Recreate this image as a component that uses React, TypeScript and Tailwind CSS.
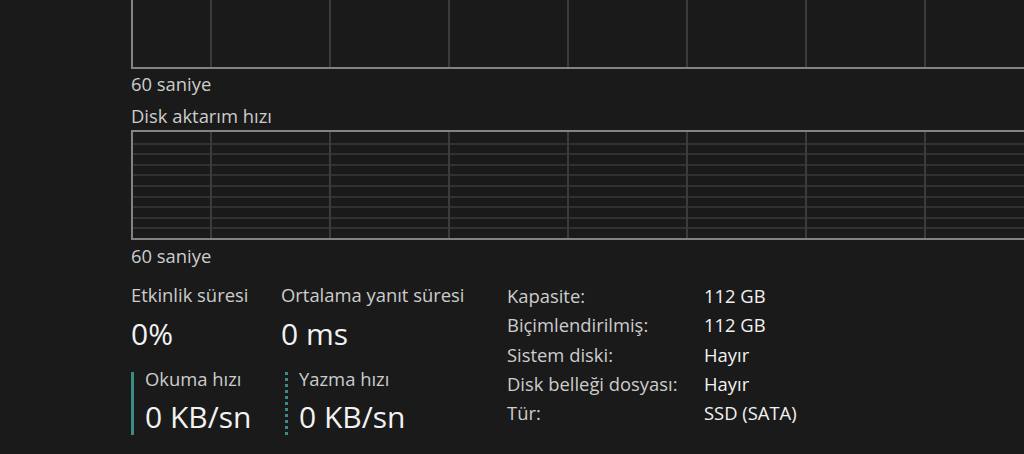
import React from "react";

const FONT = { fontFamily: '"Open Sans", "Noto Sans", sans-serif' };

const GRID_X = [0, 1, 2, 3, 4, 5, 6, 7].map((i) => 77 + i * 119);

function GridLines({ height, rows }: { height: number; rows: number }) {
  const ys = Array.from({ length: rows - 1 }, (_, i) => ((i + 1) * height) / rows);
  return (
    <svg width="1000" height={height} className="block" shapeRendering="crispEdges">
      {ys.map((y) => (
        <line key={y} x1="0" x2="1000" y1={Math.round(y) + 0.5} y2={Math.round(y) + 0.5} stroke="#313131" strokeWidth="2" />
      ))}
      {GRID_X.map((x) => (
        <line key={x} x1={x + 0.5} x2={x + 0.5} y1="0" y2={height} stroke="#3b3b3b" strokeWidth="2" />
      ))}
    </svg>
  );
}

function Metric({ label, value }: { label: string; value: string }) {
  return (
    <div>
      <div className="text-[18.4px] leading-[24px] text-[#cdcdcd] whitespace-nowrap">{label}</div>
      <div className="mt-[9px] text-[30px] leading-[36px] text-[#f2f2f2]">{value}</div>
    </div>
  );
}

function Rate({ label, value, dotted }: { label: string; value: string; dotted?: boolean }) {
  return (
    <div className="flex mt-[20px]">
      {dotted ? (
        <div className="flex flex-col gap-[3px] w-[3px]">
          {Array.from({ length: 11 }).map((_, i) => (
            <div key={i} className="h-[3px] w-[3px] bg-[#3b8c84]" />
          ))}
        </div>
      ) : (
        <div className="w-[3px] h-[63px] bg-[#3b8c84]" />
      )}
      <div className="pl-[11px]">
        <div className="text-[18.4px] leading-[14px] text-[#cdcdcd] whitespace-nowrap">{label}</div>
        <div className="mt-[13px] text-[30px] leading-[36px] text-[#f2f2f2] whitespace-nowrap">{value}</div>
      </div>
    </div>
  );
}

const INFO: [string, string][] = [
  ["Kapasite:", "112 GB"],
  ["Biçimlendirilmiş:", "112 GB"],
  ["Sistem diski:", "Hayır"],
  ["Disk belleği dosyası:", "Hayır"],
  ["Tür:", "SSD (SATA)"],
];

export default function App() {
  return (
    <div className="w-[1024px] h-[454px] overflow-hidden bg-[#1a1a1a] pl-[131px]" style={FONT}>
      {/* first chart, its top is scrolled out of view */}
      <div className="w-[1000px] h-[69px] border-l-2 border-b-2 border-[#838383] overflow-hidden flex items-end">
        <svg width="1000" height="67" className="block" shapeRendering="crispEdges">
          {GRID_X.map((x) => (
            <line key={x} x1={x + 0.5} x2={x + 0.5} y1="0" y2="67" stroke="#3b3b3b" strokeWidth="2" />
          ))}
        </svg>
      </div>
      <div className="mt-[3px] text-[18.4px] leading-[24px] text-[#cdcdcd]">60 saniye</div>
      <div className="mt-[8px] text-[18.4px] leading-[24px] text-[#cdcdcd]">Disk aktarım hızı</div>

      {/* transfer rate chart */}
      <div className="mt-[2px] w-[1000px] h-[110px] border-2 border-[#838383] overflow-hidden">
        <GridLines height={106} rows={10} />
      </div>
      <div className="mt-[4px] text-[18.4px] leading-[24px] text-[#cdcdcd]">60 saniye</div>

      <div className="flex items-start pt-[15px]">
        <div className="w-[150px]">
          <Metric label="Etkinlik süresi" value="0%" />
          <Rate label="Okuma hızı" value="0 KB/sn" />
        </div>
        <div className="w-[226px]">
          <Metric label="Ortalama yanıt süresi" value="0 ms" />
          <div className="ml-[4px]">
            <Rate label="Yazma hızı" value="0 KB/sn" dotted />
          </div>
        </div>
        <div className="-mt-[2px] grid grid-cols-[197px_auto] text-[18.4px] leading-[29.3px]">
          {INFO.map(([k, v]) => (
            <React.Fragment key={k}>
              <div className="text-[#cdcdcd] whitespace-nowrap">{k}</div>
              <div className="text-[#f2f2f2] whitespace-nowrap">{v}</div>
            </React.Fragment>
          ))}
        </div>
      </div>
    </div>
  );
}
